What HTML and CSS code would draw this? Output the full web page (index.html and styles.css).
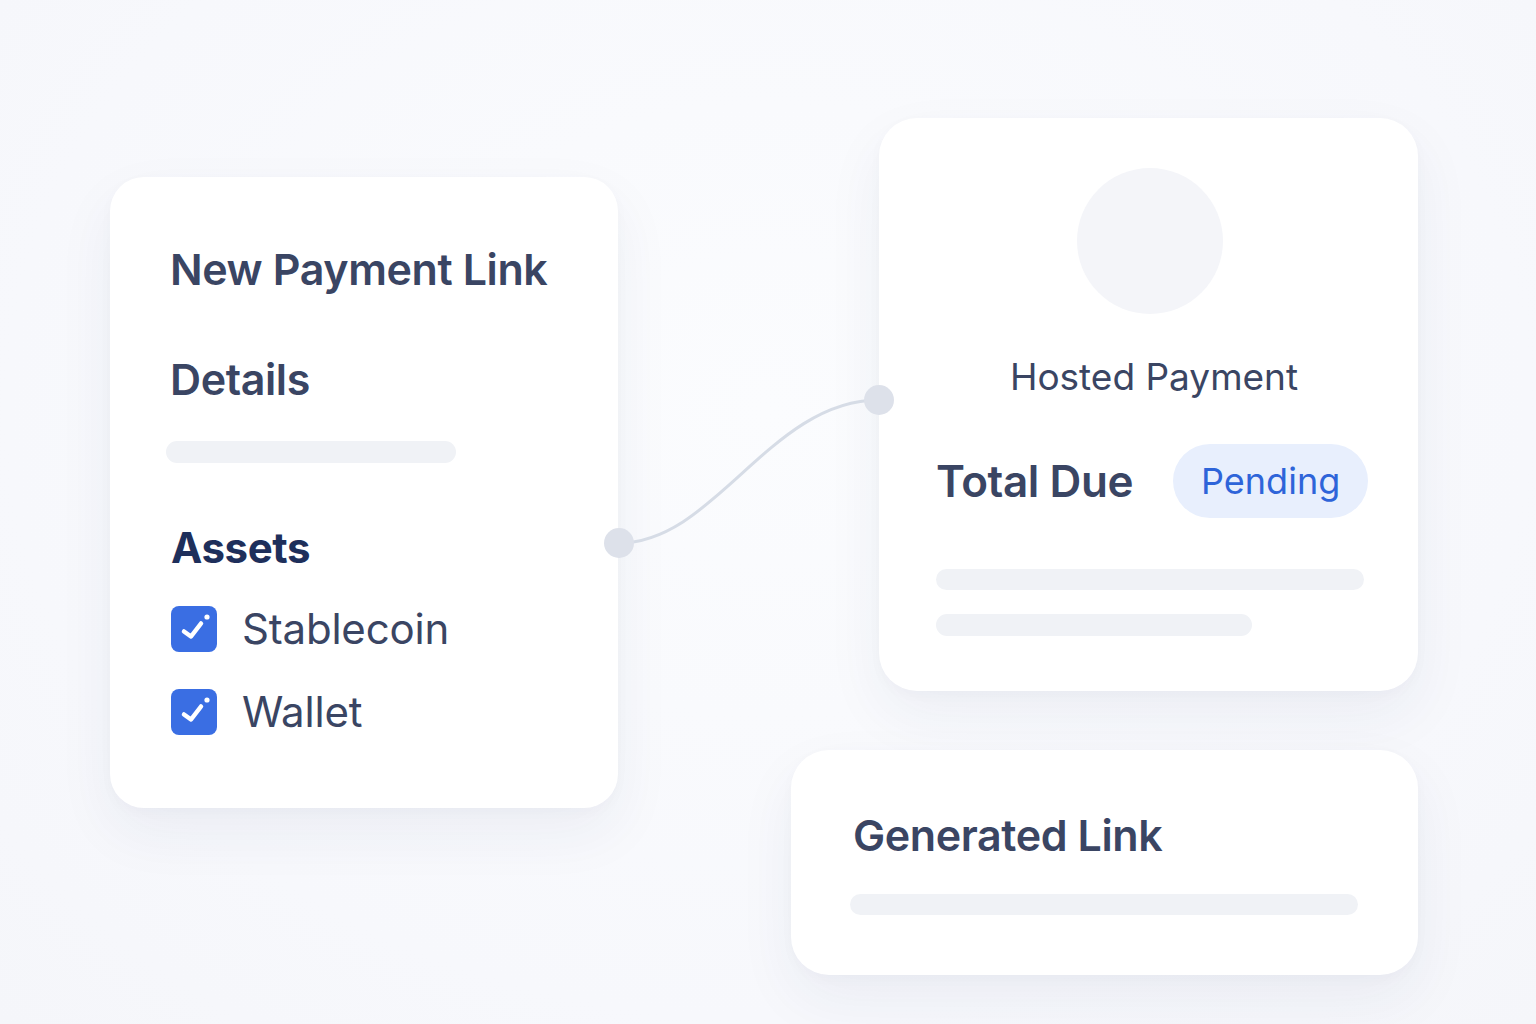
FILE: index.html
```html
<!DOCTYPE html>
<html lang="en">
<head>
    <meta charset="UTF-8">
    <meta name="viewport" content="width=device-width, initial-scale=1.0">
    <title>Payment Links</title>
    <link rel="stylesheet" href="styles.css">
</head>
<body>
    <div class="canvas">
        <!-- Connector between the two cards -->
        <svg class="connector" width="1536" height="1024" viewBox="0 0 1536 1024">
            <path d="M619 543 C 715 543, 770 400, 879 400" fill="none" stroke="#d6dce6" stroke-width="3"/>
            <circle cx="619" cy="543" r="15" fill="#dde1ea"/>
            <circle cx="879" cy="400" r="15" fill="#dde1ea"/>
        </svg>

        <!-- New Payment Link -->
        <div class="card card-new">
            <h1 class="title">New Payment Link</h1>
            <h2 class="title section">Details</h2>
            <div class="skeleton skeleton-details"></div>
            <h2 class="assets">Assets</h2>
            <ul class="asset-list">
                <li class="asset">
                    <svg class="check" width="46" height="46" viewBox="0 0 46 46">
                        <rect width="46" height="46" rx="8" fill="#3a6ee3"/>
                        <path d="M13 25.5 L20 30.5 L30 17.5" fill="none" stroke="#fff" stroke-width="4.5" stroke-linecap="round" stroke-linejoin="round"/>
                        <circle cx="36" cy="11" r="2.6" fill="#fff"/>
                    </svg>
                    <span>Stablecoin</span>
                </li>
                <li class="asset">
                    <svg class="check" width="46" height="46" viewBox="0 0 46 46">
                        <rect width="46" height="46" rx="8" fill="#3a6ee3"/>
                        <path d="M13 25.5 L20 30.5 L30 17.5" fill="none" stroke="#fff" stroke-width="4.5" stroke-linecap="round" stroke-linejoin="round"/>
                        <circle cx="36" cy="11" r="2.6" fill="#fff"/>
                    </svg>
                    <span>Wallet</span>
                </li>
            </ul>
        </div>

        <!-- Hosted Payment -->
        <div class="card card-hosted">
            <div class="avatar"></div>
            <div class="hosted-label">Hosted Payment</div>
            <div class="due-row">
                <span class="due">Total Due</span>
                <span class="badge">Pending</span>
            </div>
            <div class="skeleton skeleton-full"></div>
            <div class="skeleton skeleton-short"></div>
        </div>

        <!-- Generated Link -->
        <div class="card card-link">
            <h2 class="title">Generated Link</h2>
            <div class="skeleton skeleton-link"></div>
        </div>
    </div>
</body>
</html>
```

FILE: styles.css
```css
body {
    margin: 0;
    background: #f8f9fc;
    font-family: "Inter", "Noto Sans", sans-serif;
    color: #3a4563;
}

.canvas {
    position: relative;
    width: 1536px;
    height: 1024px;
    overflow: hidden;
    background: radial-gradient(ellipse at 50% 40%, #fbfcfe 0%, #f7f8fc 70%, #f5f6fa 100%);
}

.connector {
    position: absolute;
    left: 0;
    top: 0;
    z-index: 2;
}

/* Cards sit freely on the canvas */
.card {
    position: absolute;
    box-sizing: border-box;
    background: #fff;
    border-radius: 34px;
    box-shadow: 0 24px 60px rgba(40, 52, 100, 0.06), 0 4px 14px rgba(40, 52, 100, 0.025);
    display: flex;
    flex-direction: column;
}

.card-new {
    left: 110px;
    top: 177px;
    width: 508px;
    height: 631px;
    padding: 66px 40px 0 60px;
}

.card-hosted {
    left: 879px;
    top: 118px;
    width: 539px;
    height: 573px;
    padding: 50px 54px 0 57px;
    border-radius: 38px;
}

.card-link {
    left: 791px;
    top: 750px;
    width: 627px;
    height: 225px;
    padding: 59px 60px 0 59px;
    border-radius: 38px;
}

.title {
    margin: 0;
    font-size: 43px;
    line-height: 52px;
    font-weight: 600;
    letter-spacing: -0.4px;
    color: #3a4563;
}

.section {
    margin-top: 58px;
}

.skeleton {
    height: 22px;
    border-radius: 11px;
    background: #f0f2f6;
}

.skeleton-details {
    width: 290px;
    margin: 36px 0 0 -4px;
}

.assets {
    margin: 59px 0 0 1px;
    font-size: 42px;
    line-height: 52px;
    font-weight: 700;
    letter-spacing: -0.4px;
    color: #1e2f5b;
}

.asset-list {
    list-style: none;
    margin: 32px 0 0 1px;
    padding: 0;
    display: flex;
    flex-direction: column;
    gap: 37px;
}

.asset {
    display: flex;
    align-items: center;
    gap: 25px;
    font-size: 42px;
    line-height: 46px;
    font-weight: 400;
    letter-spacing: -0.2px;
    color: #3a4563;
}

.check {
    flex: none;
}

.avatar {
    align-self: center;
    width: 146px;
    height: 146px;
    border-radius: 50%;
    background: #f4f5f9;
}

.hosted-label {
    margin-top: 40px;
    padding-left: 8px;
    text-align: center;
    font-size: 37px;
    line-height: 46px;
    color: #3a4563;
}

.due-row {
    display: flex;
    align-items: center;
    gap: 40px;
    margin-top: 44px;
    white-space: nowrap;
}

.due {
    font-size: 44px;
    font-weight: 600;
    letter-spacing: -0.4px;
    line-height: 52px;
}

.badge {
    flex: none;
    display: inline-flex;
    align-items: center;
    justify-content: center;
    width: 195px;
    height: 74px;
    border-radius: 37px;
    background: #e8effd;
    color: #2e64d9;
    font-size: 36px;
}

.skeleton-full {
    margin-top: 51px;
    width: 428px;
    height: 21px;
}

.skeleton-short {
    margin-top: 24px;
    width: 316px;
}

.skeleton-link {
    margin: 33px 0 0 0;
    width: 508px;
    height: 21px;
}

.card-link .title {
    margin-left: 3px;
}
```
